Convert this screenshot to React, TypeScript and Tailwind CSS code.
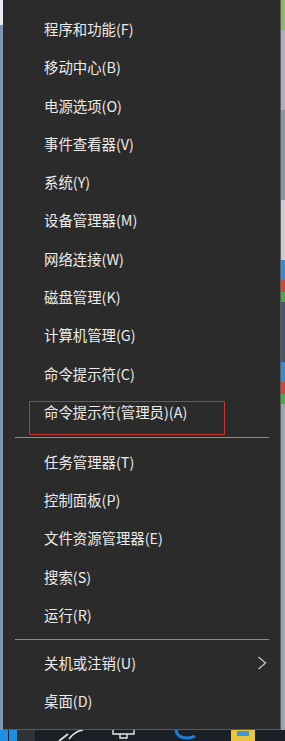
const groups: string[][] = [
  [
    "程序和功能(F)",
    "移动中心(B)",
    "电源选项(O)",
    "事件查看器(V)",
    "系统(Y)",
    "设备管理器(M)",
    "网络连接(W)",
    "磁盘管理(K)",
    "计算机管理(G)",
    "命令提示符(C)",
    "命令提示符(管理员)(A)",
  ],
  ["任务管理器(T)", "控制面板(P)", "文件资源管理器(E)", "搜索(S)", "运行(R)"],
  ["关机或注销(U)", "桌面(D)"],
];

const Item = ({ label, sub }: { label: string; sub?: boolean }) => (
  <div className="h-[38.3px] flex items-center pl-[41px] pr-[12px] text-[14.4px] text-[#ececec] leading-none">
    <span className="flex-1">{label}</span>
    {sub && (
      <svg width="10" height="14" viewBox="0 0 10 14" className="mr-[1px]">
        <path d="M1.5 1 L8.5 7 L1.5 13" fill="none" stroke="#c4c4c4" strokeWidth="1.3" />
      </svg>
    )}
  </div>
);

const Sep = ({ h }: { h: string }) => (
  <div className={`${h} flex items-center`}>
    <div className="ml-[12px] w-[254px] h-px bg-[#8c8c8c]" />
  </div>
);

export default function App() {
  return (
    <div
      className="w-[285px] h-[741px] overflow-hidden flex flex-col bg-[#1b1f26]"
      style={{ fontFamily: '"Noto Sans CJK SC", "Noto Sans", sans-serif' }}
    >
      <div className="flex h-[730px]">
        <div className="w-[3px] flex flex-col">
          <div className="h-[25px] bg-[#e8ecf2]" />
          <div className="flex-1 bg-[#7f95b8]" />
        </div>
        <div className="relative w-[278px] bg-[#2b2b2b] border-r border-b border-[#5c5c5c] pt-[10px]">
          {groups[0].map((l) => (
            <Item key={l} label={l} />
          ))}
          <Sep h="h-[11.7px]" />
          {groups[1].map((l) => (
            <Item key={l} label={l} />
          ))}
          <Sep h="h-[9.5px]" />
          {groups[2].map((l, i) => (
            <Item key={l} label={l} sub={i === 0} />
          ))}
          <div className="absolute left-[26px] top-[401px] w-[196px] h-[34px] border border-[#c8302f]" />
        </div>
        <div className="flex-1 flex flex-col">
          <div className="h-[30px] bg-[#8fb56a]" />
          <div className="h-[80px] bg-[#aab0b6]" />
          <div className="h-[90px] bg-[#8c96a2]" />
          <div className="h-[60px] bg-[#c9ccd0]" />
          <div className="h-[20px] bg-[#3a8ad0]" />
          <div className="h-[12px] bg-[#d0483a]" />
          <div className="h-[10px] bg-[#4aa84a]" />
          <div className="h-[60px] bg-[#4c5868]" />
          <div className="h-[20px] bg-[#3a8ad0]" />
          <div className="h-[12px] bg-[#d0483a]" />
          <div className="h-[10px] bg-[#4aa84a]" />
          <div className="flex-1 bg-[#9aa4b0]" />
        </div>
      </div>
      <div className="h-[11px] flex items-start relative">
        <div className="w-[17px] h-full flex gap-[1px]">
          <div className="w-[8px] h-full bg-[#1c8ee6]" />
          <div className="w-[8px] h-full bg-[#1c8ee6]" />
        </div>
        <div className="w-[18px] h-full bg-[#2e3238]" />
        <div className="flex-1 h-full relative">
          <svg width="250" height="11" viewBox="0 0 250 11" className="absolute left-0 top-0">
            <path d="M34 9 Q40 1 48 0" fill="none" stroke="#e0e0e0" strokeWidth="1.6" />
            <path d="M24 11 L33 4" fill="none" stroke="#e0e0e0" strokeWidth="1.8" />
            <path d="M78 0 V4 H99 V0 M85 4 V8 H92 V4" fill="none" stroke="#e8e8e8" strokeWidth="1.4" />
            <path d="M141 0 Q142 8 152 8 Q157 8 160 6" fill="none" stroke="#1a7fd8" strokeWidth="3" />
            <rect x="196" y="0" width="24" height="11" fill="#e8c440" />
            <rect x="202" y="1" width="12" height="5" fill="#3a9ad8" />
          </svg>
        </div>
      </div>
    </div>
  );
}
